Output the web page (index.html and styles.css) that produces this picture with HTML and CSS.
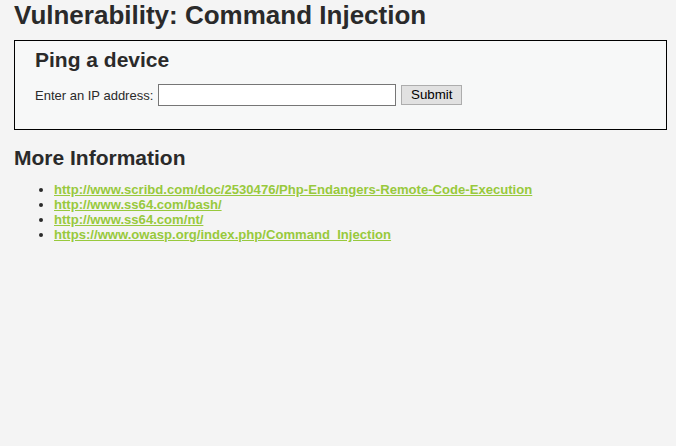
FILE: index.html
```html
<!DOCTYPE html>
<html lang="en">
<head>
<meta charset="utf-8">
<title>Vulnerability: Command Injection</title>
<link rel="stylesheet" href="styles.css">
</head>
<body>
<div class="main">
  <h1 class="title">Vulnerability: Command Injection</h1>
  <div class="code-area">
    <h2 class="box-title">Ping a device</h2>
    <form class="ping-form">
      <label class="ip-label" for="ip">Enter an IP address:</label>
      <input class="ip-input" id="ip" type="text" name="ip">
      <button class="submit-btn" type="button">Submit</button>
    </form>
  </div>
  <h2 class="section-title">More Information</h2>
  <ul class="links">
    <li><a href="#">http://www.scribd.com/doc/2530476/Php-Endangers-Remote-Code-Execution</a></li>
    <li><a href="#">http://www.ss64.com/bash/</a></li>
    <li><a href="#">http://www.ss64.com/nt/</a></li>
    <li><a href="#">https://www.owasp.org/index.php/Command_Injection</a></li>
  </ul>
</div>
</body>
</html>
```
FILE: styles.css
```css
html, body {
  margin: 0;
  padding: 0;
  background: #f4f4f4;
}
body {
  font-family: "Liberation Sans", Arial, sans-serif;
  font-size: 13px;
  color: #2a2a2a;
}
.main {
  padding: 0 9px 0 14px;
}
.title {
  margin: 0 0 10px 0;
  font-size: 26px;
  font-weight: bold;
  line-height: 30px;
  color: #2a2a2a;
}
.code-area {
  background: #f7f8f8;
  border: 1px solid #000;
  padding: 7px 20px 23px 20px;
}
.box-title {
  margin: 0;
  font-size: 21px;
  font-weight: bold;
  line-height: 24px;
}
.ping-form {
  margin: 12px 0 0 0;
  display: flex;
  align-items: center;
  height: 22px;
}
.ip-label {
  font-size: 13px;
  margin-right: 5px;
}
.ip-input {
  box-sizing: border-box;
  width: 238px;
  height: 22px;
  margin: 0;
  border: 1px solid #767676;
  background: #fff;
  padding: 1px 2px;
  font-family: "Liberation Sans", Arial, sans-serif;
  font-size: 13px;
}
.submit-btn {
  box-sizing: border-box;
  margin: 0 0 0 5px;
  width: 61px;
  height: 20px;
  padding: 0;
  border: 1px solid #adadad;
  background: #e1e1e1;
  color: #000;
  font-family: "Liberation Sans", Arial, sans-serif;
  font-size: 13.333px;
  line-height: 18px;
}
.section-title {
  margin: 16px 0 0 0;
  font-size: 21px;
  font-weight: bold;
  line-height: 24px;
}
.links {
  margin: 12px 0 0 0;
  padding-left: 40px;
}
.links li {
  line-height: 15px;
}
.links a {
  color: #98c93c;
  font-weight: bold;
  font-size: 13.1px;
  text-decoration: underline;
}
```
